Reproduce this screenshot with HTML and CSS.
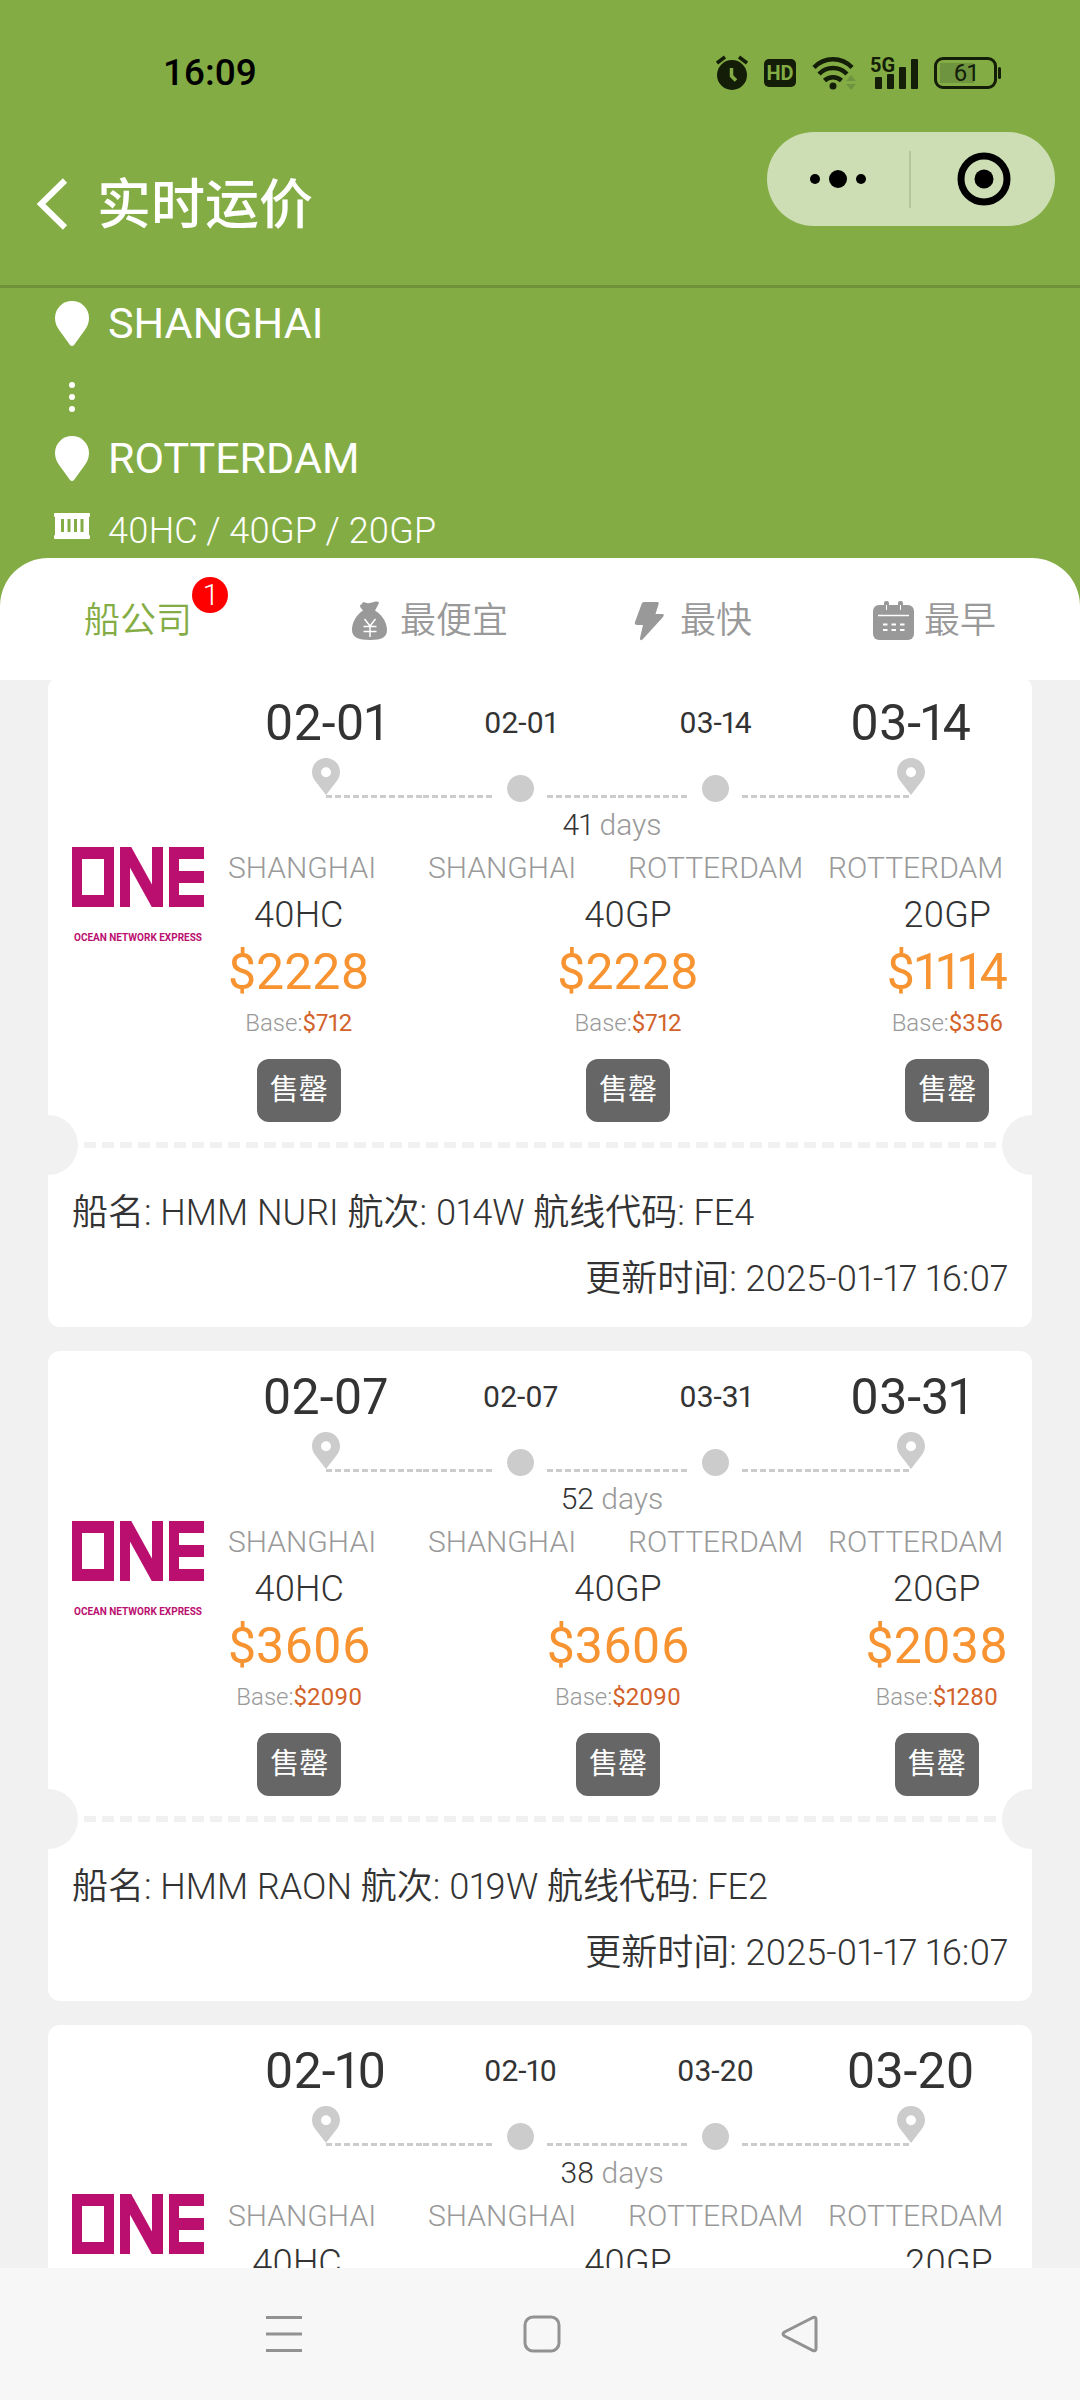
FILE: index.html
```html
<!DOCTYPE html>
<html lang="zh-CN">
<head>
<meta charset="utf-8">
<meta name="viewport" content="width=device-width, initial-scale=1">
<title>实时运价</title>
<link rel="stylesheet" href="styles.css">
</head>
<body>
<svg class="sprite" aria-hidden="true">
  <symbol id="pin" viewBox="0 0 28 37"><path fill-rule="evenodd" d="M14 0C6.300 0 0 6.200 0 14c0 4 1.500 6.800 3.600 9.600L14 37l10.400-13.400C26.500 20.800 28 18 28 14 28 6.200 21.700 0 14 0zm0 9.300a5 5 0 1 1 0 10 5 5 0 0 1 0-10z"/></symbol>
  <symbol id="place" viewBox="0 0 36 45"><path d="M18 0C8.600 0 1 7.400 1 17c0 5 1.800 8.600 4.300 12.300L16 44c1 1.300 3 1.300 4 0l10.700-14.700C33.200 25.600 35 22 35 17 35 7.400 27.400 0 18 0z"/></symbol>
  <symbol id="one" viewBox="0 0 132 124">
    <rect width="10" height="60"/><rect x="32" width="10" height="60"/><rect width="42" height="12"/><rect y="48" width="42" height="12"/>
    <rect x="48" width="10" height="60"/><rect x="80" width="11" height="60"/>
    <svg x="48" y="0" width="43" height="60" viewBox="0 0 43 60"><line x1="0" y1="-9" x2="43" y2="69" stroke="#bb0f70" stroke-width="11"/></svg>
    <rect x="97" width="10" height="60"/><rect x="97" width="35" height="12"/><rect x="97" y="24" width="35" height="12"/><rect x="97" y="48" width="35" height="12"/>
    <text class="one-text" x="66" y="94" text-anchor="middle">OCEAN NETWORK EXPRESS</text>
  </symbol>
</svg>

<div class="app">
  <header class="top">
    <div class="status">
      <span class="clock">16:09</span>
      <div class="status-icons">
        <svg width="32" height="36" viewBox="1 0 32 36"><circle cx="17" cy="20" r="15" fill="#141d07"/><path d="M2 8 10 2M32 8 24 2" stroke="#141d07" stroke-width="3.500"/><path d="M16.500 13v8l4.500 4.500" fill="none" stroke="#83ad44" stroke-width="3.500"/></svg>
        <span class="hd">HD</span>
        <svg width="44" height="36" viewBox="0 0 44 36"><g fill="none" stroke="#141d07" stroke-width="4.500"><path d="M2 12.500a26 26 0 0 1 38 0"/><path d="M7 19a19.500 19.500 0 0 1 28 0"/><path d="M12.500 25.500a12.500 12.500 0 0 1 17 0"/></g><circle cx="21" cy="31" r="3.500" fill="#141d07"/><path d="M34 26l5-6 5 6zM34 29l5 6 5-6z" fill="#6f9440"/></svg>
        <div class="signal">
          <span class="net">5G</span>
          <svg width="46" height="36" viewBox="0 0 46 36" fill="#141d07"><rect x="3" y="22" width="7" height="12" rx="1"/><rect x="15" y="19" width="7" height="15" rx="1"/><rect x="27" y="12" width="7" height="22" rx="1"/><rect x="39" y="4" width="7" height="30" rx="1"/></svg>
        </div>
        <span class="battery">61</span>
      </div>
    </div>
    <div class="titlebar">
      <button class="back" aria-label="返回"><svg width="36" height="56" viewBox="0 0 36 56"><path d="M31 4.500 7 28l24 23.500" fill="none" stroke="#fff" stroke-width="6"/></svg></button>
      <h1>实时运价</h1>
      <div class="capsule">
        <button aria-label="更多"><svg width="60" height="56" viewBox="0 0 60 56"><circle cx="7" cy="28" r="5"/><circle cx="30" cy="28" r="9"/><circle cx="53" cy="28" r="5"/></svg></button>
        <button aria-label="关闭"><svg width="56" height="56" viewBox="0 0 56 56"><circle cx="28" cy="28" r="23" fill="none" stroke="#000" stroke-width="7"/><circle cx="28" cy="28" r="9.500"/></svg></button>
      </div>
    </div>
  </header>

  <section class="route">
    <div class="place"><svg width="36" height="45"><use href="#place"/></svg>SHANGHAI</div>
    <svg class="dots" width="36" height="90" viewBox="0 0 36 90"><circle cx="18" cy="39" r="3"/><circle cx="18" cy="51" r="3"/><circle cx="18" cy="63" r="3"/></svg>
    <div class="place"><svg width="36" height="45"><use href="#place"/></svg>ROTTERDAM</div>
    <div class="boxes"><svg width="36" height="26" viewBox="0 0 36 26"><path fill-rule="evenodd" d="M1 0h34q1 0 1 1v2q0 1-1 1v18q1 0 1 1v2q0 1-1 1H1q-1 0-1-1v-2q0-1 1-1V4Q0 4 0 3V1q0-1 1-1zM7 6v13h3V6zm6.500 0v13h3V6zM20 6v13h3V6zm6.500 0v13h3V6z"/></svg>40HC / 40GP / 20GP</div>
  </section>

  <nav class="tabs">
    <button class="tab active">船公司<span class="badge">1</span></button>
    <button class="tab"><svg width="44" height="40" viewBox="-1 0 44 40"><path d="M13 3c0-1.500 1.500-2 3-1.500 4 1.500 6 0 9-.5 3-.8 6-.6 4.500 2L26 9.500c7 4 12 12 12 19.500 0 7-5 10-17 10S3 36 3 29c0-7.500 4-15 11-19.500-1-1.500-3-3-3-4.500 0-1 1-1.500 2-2z"/><path d="M15.500 18 21 25l5.500-7M21 25v11M14.500 25.500h13M14.500 30.500h13" fill="none" stroke="#fff" stroke-width="1.500"/></svg>最便宜</button>
    <button class="tab"><svg width="44" height="40" viewBox="-3 0 44 40"><path d="M11 2q1-1 2-1h13q2.500 0 1.500 2.500L24.500 13H31q3 0 1 3L12 38q-3 3-3-1l3-13H6q-3 0-2-3z"/></svg>最快</button>
    <button class="tab"><svg width="44" height="40" viewBox="0 0 44 40"><rect x="1" y="4" width="41" height="35" rx="6"/><rect x="12" y="0" width="5" height="10" rx="2"/><rect x="26" y="0" width="5" height="10" rx="2"/><path d="M14.500 4v5M28.500 4v5" stroke="#fff" stroke-width="1"/><path d="M6 14.500h31" stroke="#fff" stroke-width="1.500"/><path d="M11 23.500h22M11 29h22" stroke="#fff" stroke-width="2" stroke-dasharray="4.500 4"/></svg>最早</button>
  </nav>

  <main class="list">
    <article class="card">
      <div class="voyage">
        <svg class="logo" role="img" aria-label="ONE"><use href="#one"/></svg>
        <div class="detail">
          <div class="dates"><b>02-01</b><span>02-01</span><span>03-14</span><b>03-14</b></div>
          <div class="track"><div class="end start"><svg><use href="#pin"/></svg><i></i></div><div class="stop"><i></i><em></em><i></i></div><div class="stop"><i></i><em></em><i></i></div><div class="end"><svg><use href="#pin"/></svg><i></i></div></div>
          <p class="days"><span>41</span> days</p>
          <div class="ports"><span>SHANGHAI</span><span>SHANGHAI</span><span>ROTTERDAM</span><span>ROTTERDAM</span></div>
          <div class="rates">
            <div class="rate"><span class="type">40HC</span><strong>$2228</strong><small>Base:<span>$712</span></small><button>售罄</button></div>
            <div class="rate"><span class="type">40GP</span><strong>$2228</strong><small>Base:<span>$712</span></small><button>售罄</button></div>
            <div class="rate"><span class="type">20GP</span><strong>$1114</strong><small>Base:<span>$356</span></small><button>售罄</button></div>
          </div>
        </div>
      </div>
      <div class="tear"></div>
      <p class="info">船名: HMM NURI 航次: 014W 航线代码: FE4</p>
      <p class="info updated">更新时间: 2025-01-17 16:07</p>
    </article>

    <article class="card">
      <div class="voyage">
        <svg class="logo" role="img" aria-label="ONE"><use href="#one"/></svg>
        <div class="detail">
          <div class="dates"><b>02-07</b><span>02-07</span><span>03-31</span><b>03-31</b></div>
          <div class="track"><div class="end start"><svg><use href="#pin"/></svg><i></i></div><div class="stop"><i></i><em></em><i></i></div><div class="stop"><i></i><em></em><i></i></div><div class="end"><svg><use href="#pin"/></svg><i></i></div></div>
          <p class="days"><span>52</span> days</p>
          <div class="ports"><span>SHANGHAI</span><span>SHANGHAI</span><span>ROTTERDAM</span><span>ROTTERDAM</span></div>
          <div class="rates">
            <div class="rate"><span class="type">40HC</span><strong>$3606</strong><small>Base:<span>$2090</span></small><button>售罄</button></div>
            <div class="rate"><span class="type">40GP</span><strong>$3606</strong><small>Base:<span>$2090</span></small><button>售罄</button></div>
            <div class="rate"><span class="type">20GP</span><strong>$2038</strong><small>Base:<span>$1280</span></small><button>售罄</button></div>
          </div>
        </div>
      </div>
      <div class="tear"></div>
      <p class="info">船名: HMM RAON 航次: 019W 航线代码: FE2</p>
      <p class="info updated">更新时间: 2025-01-17 16:07</p>
    </article>

    <article class="card partial">
      <div class="voyage">
        <svg class="logo" role="img" aria-label="ONE"><use href="#one"/></svg>
        <div class="detail">
          <div class="dates"><b>02-10</b><span>02-10</span><span>03-20</span><b>03-20</b></div>
          <div class="track"><div class="end start"><svg><use href="#pin"/></svg><i></i></div><div class="stop"><i></i><em></em><i></i></div><div class="stop"><i></i><em></em><i></i></div><div class="end"><svg><use href="#pin"/></svg><i></i></div></div>
          <p class="days"><span>38</span> days</p>
          <div class="ports"><span>SHANGHAI</span><span>SHANGHAI</span><span>ROTTERDAM</span><span>ROTTERDAM</span></div>
          <div class="rates">
            <div class="rate"><span class="type">40HC</span></div>
            <div class="rate"><span class="type">40GP</span></div>
            <div class="rate"><span class="type">20GP</span></div>
          </div>
        </div>
      </div>
    </article>
  </main>

  <footer class="sysnav">
    <button aria-label="最近任务"><svg width="40" height="40" viewBox="0 0 40 40"><path d="M2 3.500h36M2 20h36M2 36.500h36"/></svg></button>
    <button aria-label="主屏幕"><svg width="40" height="40" viewBox="0 0 40 40"><rect x="3" y="3" width="34" height="34" rx="8"/></svg></button>
    <button aria-label="返回上一级"><svg width="40" height="40" viewBox="0 0 40 40"><path d="M33 3.500 4.500 18q-3 2 0 4L33 36.500q3 1 3-2v-29q0-3-3-2z"/></svg></button>
  </footer>
</div>
</body>
</html>
```
FILE: styles.css
```css
* { box-sizing: border-box; margin: 0; padding: 0; }

body {
  font-family: Roboto, "Noto Sans CJK SC", sans-serif;
  font-size: 36px;
  font-variant-numeric: proportional-nums;
  color: #333;
  background: #f1f1f1;
}

button {
  font: inherit;
  color: inherit;
  background: none;
  border: 0;
}

svg { display: block; flex: none; }
.sprite { position: absolute; width: 0; height: 0; }

.app { display: flex; flex-direction: column; height: 100vh; background: #83ad44; }

/* status bar and title */
.top { border-bottom: 3px solid #6e9139; padding-bottom: 29px; }
.status {
  display: flex;
  align-items: center;
  justify-content: space-between;
  height: 92px;
  margin-top: 27px;
  padding: 0 83px 0 163px;
}
.clock { font-size: 37px; line-height: 48px; font-weight: 500; font-variant-numeric: tabular-nums; color: #000; }
.status-icons { display: flex; align-items: center; gap: 16px; color: #141d07; }
.hd {
  width: 32px;
  height: 28px;
  border-radius: 5px;
  background: #141d07;
  color: #83ad44;
  font-size: 20px;
  font-weight: 700;
  line-height: 28px;
  text-align: center;
}
.signal { position: relative; }
.net { position: absolute; left: -2px; top: 1px; font-size: 20px; line-height: 18px; font-weight: 700; }
.battery {
  position: relative;
  width: 63px;
  height: 32px;
  border: 3px solid #141d07;
  border-radius: 9px;
  background: linear-gradient(#6f9440, #6f9440) 3px 3px / 34px 20px no-repeat;
  font-size: 24px;
  line-height: 27px;
  text-align: center;
}
.battery::after {
  content: "";
  position: absolute;
  right: -7px;
  top: 7px;
  width: 3px;
  height: 12px;
  border-radius: 2px;
  background: #141d07;
}
.titlebar { display: flex; align-items: flex-end; height: 137px; padding: 13px 25px 0 34px; }
.titlebar h1 { margin-left: 27px; font-size: 54px; line-height: 100px; font-weight: 500; color: #fff; }
.back { margin-bottom: 24px; }
.capsule {
  display: flex;
  align-self: flex-start;
  width: 288px;
  height: 94px;
  margin-left: auto;
  border-radius: 47px;
  background: #cddeb5;
}
.capsule button { flex: 1; display: flex; align-items: center; justify-content: center; }
.capsule button + button { padding-left: 4px; background: linear-gradient(#b4c69b, #b4c69b) 0 50% / 2px 57px no-repeat; }

/* selected route */
.route { padding: 13px 54px 5px; color: #fff; fill: #fff; }
.place { display: flex; align-items: center; gap: 18px; height: 45px; font-size: 43px; line-height: 45px; }
.boxes {
  display: flex;
  align-items: center;
  gap: 18px;
  height: 72px;
  padding-top: 27px;
  line-height: 44px;
  font-weight: 350;
}
.boxes svg { align-self: flex-start; margin-top: 5px; }

/* sort tabs */
.tabs {
  position: relative;
  display: flex;
  justify-content: space-between;
  height: 122px;
  padding: 0 84px;
  border-radius: 48px 48px 0 0;
  background: #fff;
}
.tab { display: flex; align-items: center; gap: 8px; padding-top: 4px; color: #999; fill: #999; font-weight: 350; line-height: 52px; }
.tab.active { gap: 0; color: #83ad44; }
.badge {
  align-self: flex-start;
  width: 36px;
  height: 36px;
  margin-top: 15px;
  border-radius: 50%;
  background: #f00;
  color: #fff;
  font-size: 30px;
  line-height: 36px;
}

/* sailings */
.list { flex: 1; min-height: 0; overflow: hidden; background: #f1f1f1; }
.card { margin: 0 48px 24px; padding: 18px 24px 15px; border-radius: 12px; background: #fff; }
.card:first-child { margin-top: -3px; }
.voyage { display: flex; align-items: center; gap: 24px; }
.logo { width: 132px; height: 124px; fill: #bb0f70; }
.partial .voyage { align-items: flex-start; }
.partial .logo { margin-top: 151px; }
.one-text { font: 700 10px Roboto, sans-serif; }
.detail { flex: 1; min-width: 0; }
.dates, .track { display: grid; grid-template-columns: repeat(4, 1fr); }
.dates { align-items: center; font-size: 30px; line-height: 56px; text-align: center; }
.dates b { font-size: 50px; font-weight: 400; }
.track { height: 44px; margin: 7px 0 0; }
.track i { display: block; height: 3px; background: repeating-linear-gradient(90deg, #ccc 0 6px, transparent 6px 9px); }
.end svg { width: 28px; height: 37px; margin: 0 auto; fill: #ccc; }
.end i { margin-right: 50%; }
.end.start i { margin: 0 0 0 50%; }
.stop { display: flex; align-items: flex-end; gap: 13px; }
.stop i { flex: 1; margin-bottom: 4px; }
.stop em { width: 27px; height: 27px; border-radius: 50%; background: #ccc; }
.days { padding-right: 12px; font-size: 30px; line-height: 46px; text-align: center; color: #999; font-weight: 350; }
.days span { color: #333; }
.ports { display: grid; grid-template-columns: repeat(4, 1fr); gap: 20px; font-size: 30px; line-height: 40px; font-weight: 300; color: #999; }
.rates { display: flex; justify-content: space-between; }
.rate { display: flex; flex-direction: column; align-items: center; min-width: 118px; }
.partial .rate:not(:last-child) { min-width: 138px; }
.type { line-height: 54px; font-weight: 350; }
.rate strong { font-size: 50px; line-height: 60px; font-weight: 400; color: #f79330; }
.rate small { font-size: 24px; line-height: 42px; font-weight: 350; color: #999; }
.rate small span { color: #d2622a; font-weight: 400; }
.rate button {
  width: 84px;
  height: 63px;
  margin-top: 15px;
  border-radius: 12px;
  background: #666;
  color: #fff;
  font-size: 29px;
  line-height: 63px;
}
.tear {
  position: relative;
  height: 6px;
  margin: 20px 12px 32px;
  background: repeating-linear-gradient(90deg, #f1f1f1 0 12px, transparent 12px 18px);
}
.tear::before, .tear::after {
  content: "";
  position: absolute;
  top: -27px;
  width: 30px;
  height: 60px;
  background: #f1f1f1;
}
.tear::before { left: -36px; border-radius: 0 30px 30px 0; }
.tear::after { right: -36px; border-radius: 30px 0 0 30px; }
.info { line-height: 66px; font-weight: 350; }
.updated { text-align: right; }

/* system navigation */
.sysnav {
  display: flex;
  align-items: center;
  justify-content: center;
  gap: 218px;
  height: 132px;
  padding-left: 4px;
  background: #f7f7f7;
}
.sysnav svg { fill: none; stroke: #929292; stroke-width: 3; }
```
